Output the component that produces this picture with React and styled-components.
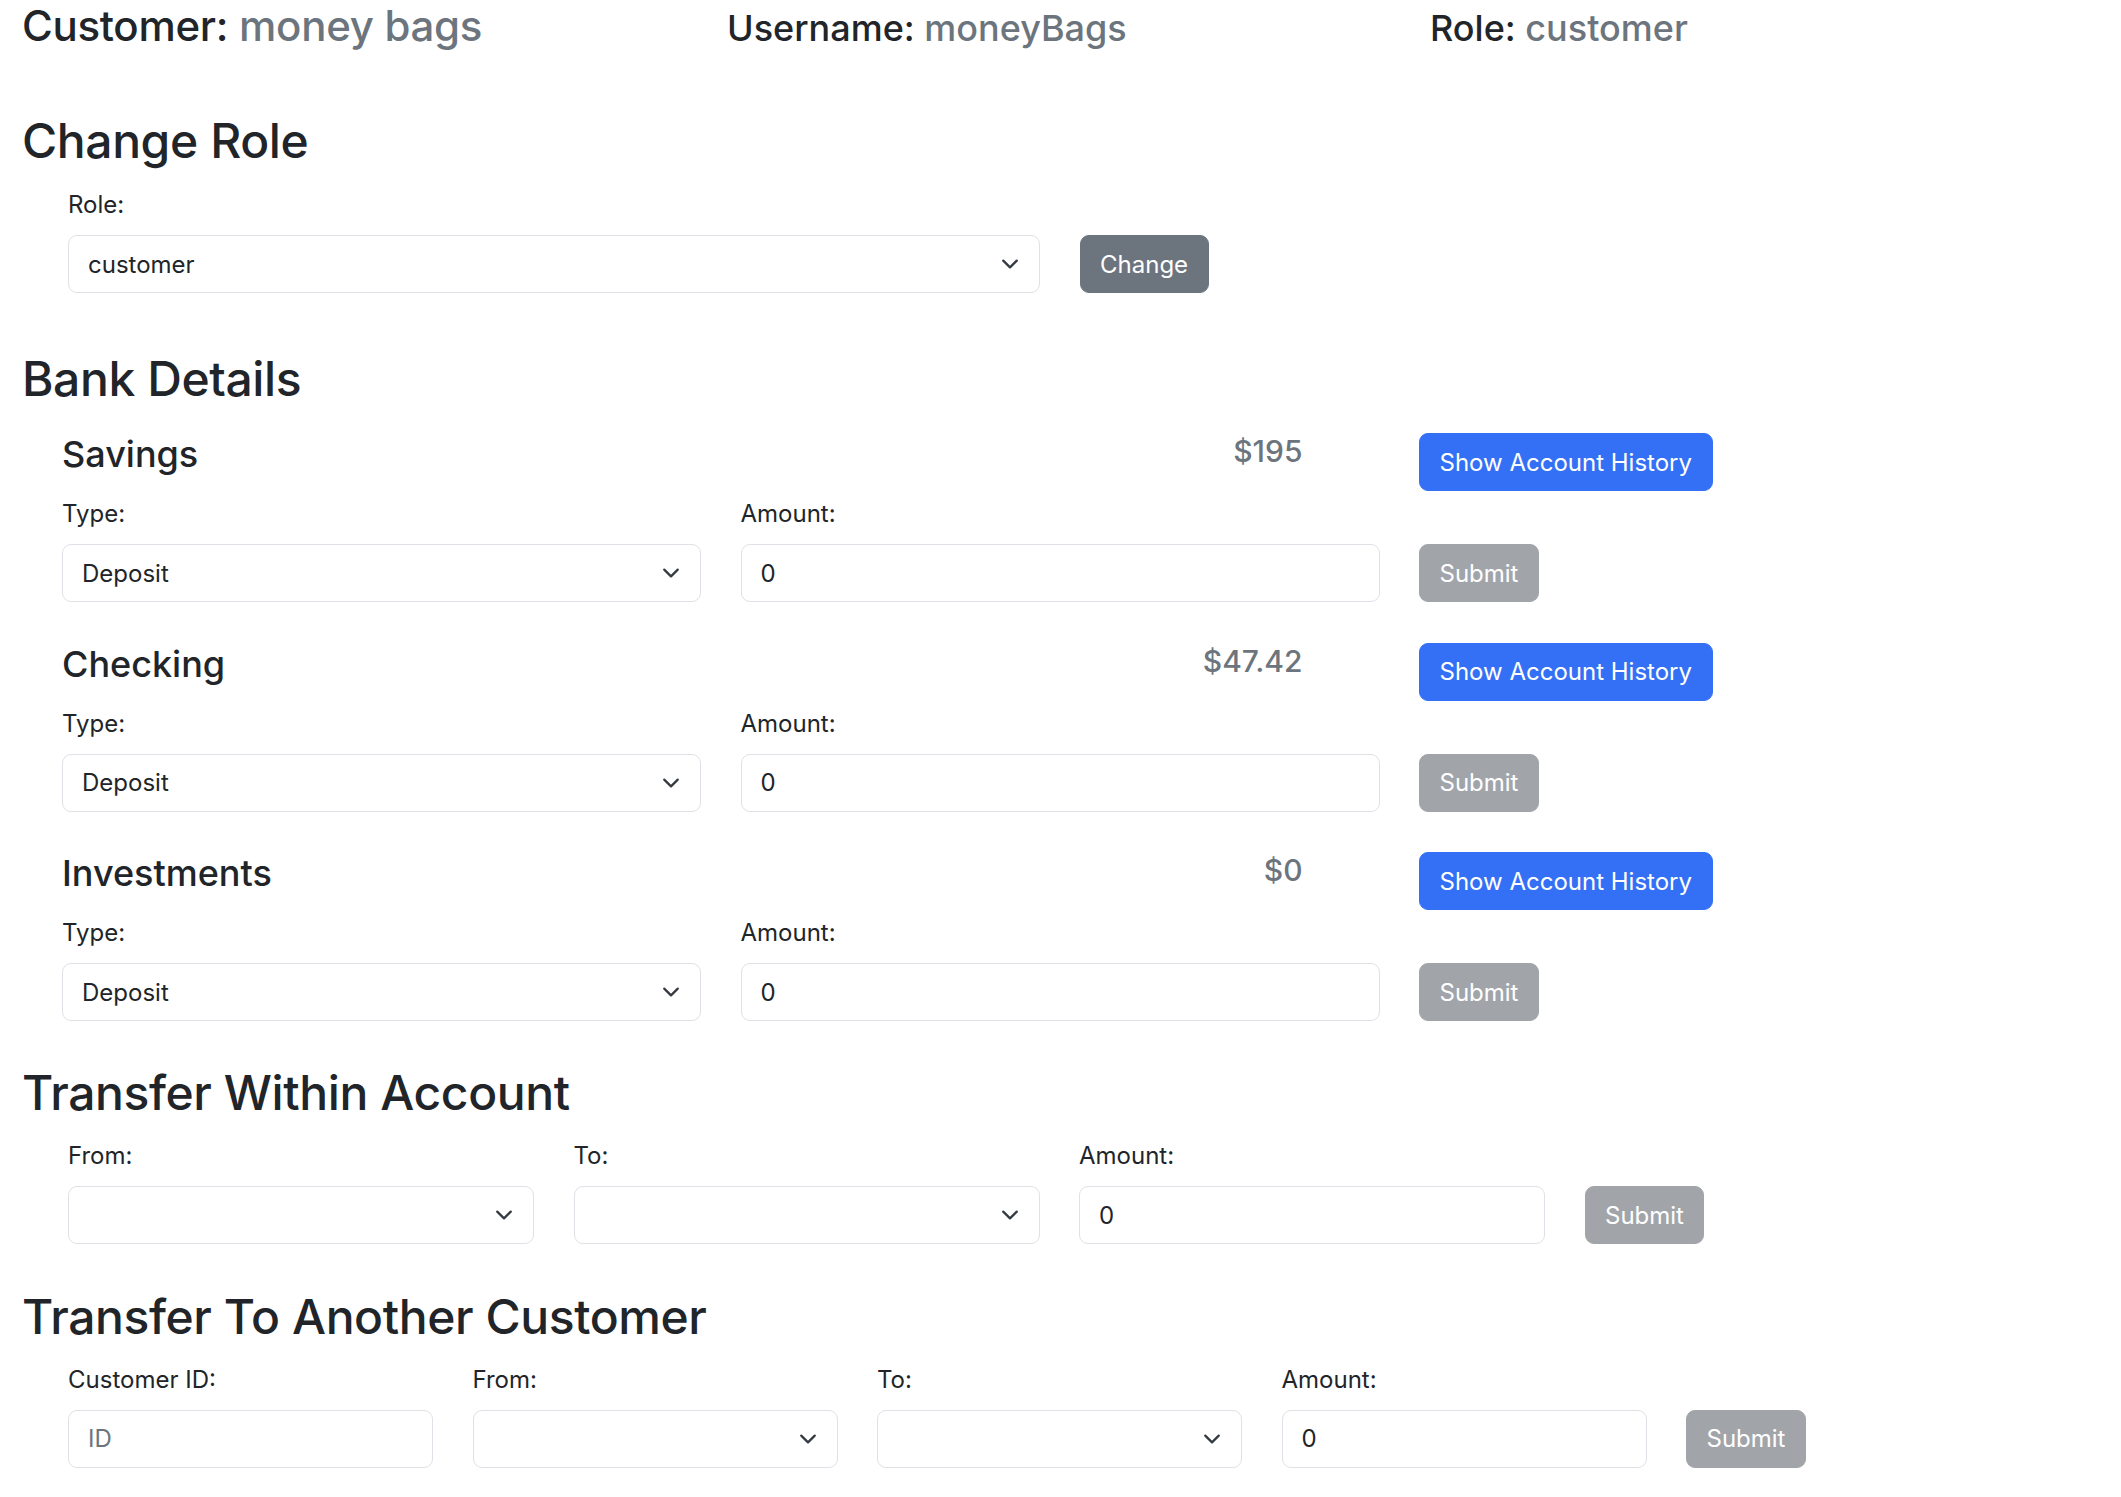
import React from 'react';
import styled, { createGlobalStyle } from 'styled-components';

const GlobalStyle = createGlobalStyle`
  * { box-sizing: border-box; }
  body {
    margin: 0;
    background: #fff;
    color: #212529;
    font-family: Inter, "Noto Sans", "Liberation Sans", sans-serif;
  }
`;

const Page = styled.div`
  padding: 1px 0 40px 22px;
`;

// top line: customer / username / role
const InfoRow = styled.div`
  display: grid;
  grid-template-columns: 705px 703px auto;
  align-items: baseline;
`;

const InfoItem = styled.h3`
  margin: 0;
  font-size: ${(p) => (p.$small ? 36 : 42)}px;
  line-height: ${(p) => (p.$small ? 43 : 50)}px;
  letter-spacing: ${(p) => (p.$small ? 0 : -0.3)}px;
  font-weight: 500;
`;

const Muted = styled.span`
  color: #6c757d;
`;

const SectionTitle = styled.h2`
  margin: ${(p) => p.$top}px 0 0;
  font-size: 48px;
  line-height: 58px;
  letter-spacing: -0.4px;
  font-weight: 500;
`;

const FormGrid = styled.div`
  display: grid;
  grid-template-columns: ${(p) => p.$cols};
  column-gap: 39.5px;
  margin: ${(p) => p.$top}px 0 0 ${(p) => p.$indent}px;
`;

const AccountBlock = styled.div`
  display: grid;
  grid-template-columns: 639px 639px auto;
  grid-template-rows: 63px auto;
  column-gap: 39.5px;
  margin: ${(p) => p.$top}px 0 0 40px;
`;

const AccountName = styled.h4`
  margin: 0;
  font-size: 36px;
  line-height: 43px;
  font-weight: 500;
`;

const Balance = styled.h5`
  margin: 0;
  padding-right: 77px;
  text-align: right;
  font-size: 30px;
  line-height: 36px;
  font-weight: 500;
  color: #6c757d;
`;

const Field = styled.div`
  display: flex;
  flex-direction: column;
`;

const Label = styled.label`
  font-size: 24px;
  line-height: 36px;
  margin-bottom: 12px;
`;

const TextInput = styled.input`
  width: 100%;
  height: 58px;
  padding: 0 19px;
  border: 1.5px solid #dee2e6;
  border-radius: 9px;
  background: #fff;
  color: #212529;
  font-family: inherit;
  font-size: 24px;
  outline: none;

  &::placeholder {
    color: #6c757d;
  }
`;

const SelectWrap = styled.div`
  position: relative;
`;

const Select = styled.select`
  appearance: none;
  width: 100%;
  height: 58px;
  padding: 0 54px 0 19px;
  border: 1.5px solid #dee2e6;
  border-radius: 9px;
  background: #fff;
  color: #212529;
  font-family: inherit;
  font-size: 24px;
  outline: none;
`;

const Chevron = styled.svg`
  position: absolute;
  right: 18px;
  top: 50%;
  width: 24px;
  height: 18px;
  transform: translateY(-50%);
  pointer-events: none;
`;

const colors = {
  primary: '#3470f5',
  secondary: '#6c757d',
  disabled: '#a1a5aa',
};

const Button = styled.button`
  justify-self: start;
  align-self: ${(p) => (p.$bottom ? 'end' : 'start')};
  height: 58px;
  padding: 0 19.5px;
  border: 1.5px solid ${(p) => colors[p.$variant]};
  border-radius: 9px;
  background: ${(p) => colors[p.$variant]};
  color: #fff;
  font-family: inherit;
  font-size: 24px;
  white-space: nowrap;
`;

function DropDown({ value, options }) {
  return (
    <SelectWrap>
      <Select defaultValue={value}>
        {options.map((o) => (
          <option key={o} value={o}>{o}</option>
        ))}
      </Select>
      <Chevron viewBox="0 0 16 16">
        <path d="m2 5 6 6 6-6" fill="none" stroke="#343a40" strokeWidth="2" strokeLinecap="round" strokeLinejoin="round" />
      </Chevron>
    </SelectWrap>
  );
}

const accounts = [
  { name: 'Savings', balance: '$195' },
  { name: 'Checking', balance: '$47.42' },
  { name: 'Investments', balance: '$0' },
];

const accountOptions = ['', 'Savings', 'Checking', 'Investments'];

export default function App() {
  return (
    <Page>
      <GlobalStyle />
      <InfoRow>
        <InfoItem>Customer: <Muted>money bags</Muted></InfoItem>
        <InfoItem $small>Username: <Muted>moneyBags</Muted></InfoItem>
        <InfoItem $small>Role: <Muted>customer</Muted></InfoItem>
      </InfoRow>

      <SectionTitle $top={61}>Change Role</SectionTitle>
      <FormGrid $cols="972px auto" $indent={46} $top={17}>
        <Field>
          <Label>Role:</Label>
          <DropDown value="customer" options={['customer', 'employee', 'admin']} />
        </Field>
        <Button $variant="secondary" $bottom>Change</Button>
      </FormGrid>

      <SectionTitle $top={57}>Bank Details</SectionTitle>
      {accounts.map((a, i) => (
        <AccountBlock key={a.name} $top={i === 0 ? 25 : 40.5}>
          <AccountName>{a.name}</AccountName>
          <Balance>{a.balance}</Balance>
          <Button $variant="primary">Show Account History</Button>
          <Field>
            <Label>Type:</Label>
            <DropDown value="Deposit" options={['Deposit', 'Withdraw']} />
          </Field>
          <Field>
            <Label>Amount:</Label>
            <TextInput type="number" defaultValue="0" />
          </Field>
          <Button $variant="disabled" $bottom disabled>Submit</Button>
        </AccountBlock>
      ))}

      <SectionTitle $top={43}>Transfer Within Account</SectionTitle>
      <FormGrid $cols="466px 466px 466px auto" $indent={46} $top={16}>
        <Field>
          <Label>From:</Label>
          <DropDown value="" options={accountOptions} />
        </Field>
        <Field>
          <Label>To:</Label>
          <DropDown value="" options={accountOptions} />
        </Field>
        <Field>
          <Label>Amount:</Label>
          <TextInput type="number" defaultValue="0" />
        </Field>
        <Button $variant="disabled" $bottom disabled>Submit</Button>
      </FormGrid>

      <SectionTitle $top={43.5}>Transfer To Another Customer</SectionTitle>
      <FormGrid $cols="365px 365px 365px 365px auto" $indent={46} $top={16}>
        <Field>
          <Label>Customer ID:</Label>
          <TextInput placeholder="ID" />
        </Field>
        <Field>
          <Label>From:</Label>
          <DropDown value="" options={accountOptions} />
        </Field>
        <Field>
          <Label>To:</Label>
          <DropDown value="" options={accountOptions} />
        </Field>
        <Field>
          <Label>Amount:</Label>
          <TextInput type="number" defaultValue="0" />
        </Field>
        <Button $variant="disabled" $bottom disabled>Submit</Button>
      </FormGrid>
    </Page>
  );
}
